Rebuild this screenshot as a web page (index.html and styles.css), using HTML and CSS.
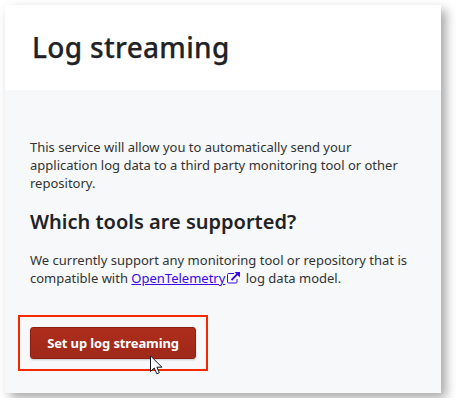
FILE: index.html
```html
<!DOCTYPE html>
<html lang="en">
<head>
<meta charset="utf-8">
<title>Log streaming</title>
<link rel="stylesheet" href="styles.css">
</head>
<body>
<main class="card">
  <header class="card-header">
    <h1 class="title">Log streaming</h1>
  </header>
  <section class="card-body">
    <p class="text">This service will allow you to automatically send your<br>application log data to a third party monitoring tool or other<br>repository.</p>
    <h2 class="subtitle">Which tools are supported?</h2>
    <p class="text">We currently support any monitoring tool or repository that is<br>compatible with <a class="link" href="#">OpenTelemetry</a><svg class="external" viewBox="0 0 14 12" aria-hidden="true"><path d="M8 1.500H2.500a1 1 0 0 0-1 1v7.500a1 1 0 0 0 1 1h7.500a1 1 0 0 0 1-1V7" fill="none" stroke="#3a0ae6" stroke-width="1"/><path d="M5.500 8L12 1.500" stroke="#3a0ae6" stroke-width="1.800"/><path d="M8.500 0H14V5.500z" fill="#3a0ae6"/></svg> log data model.</p>
    <div class="highlight">
      <button class="button" type="button">Set up log streaming</button>
      <svg class="cursor" viewBox="0 0 13 20" aria-hidden="true"><path d="M.5.8V16.500L4.200 13L6.800 18.800L9.300 17.700L6.900 12.200H11.900z" fill="#fff" stroke="#15151f" stroke-width="1"/></svg>
    </div>
  </section>
</main>
</body>
</html>
```

FILE: styles.css
```css
* {
  box-sizing: border-box;
}

body {
  margin: 0;
  padding: 5px;
  background: #fff;
  color: #333;
  font-family: "Noto Sans", sans-serif;
  overflow: hidden;
}

.card {
  width: 436px;
  height: 388px;
  background: #f6f8fa;
  box-shadow: 5px 5px 10px rgba(0, 0, 0, 0.35);
}

.card-header {
  height: 85px;
  padding: 22px 27px 0;
  background: #fff;
}

.title {
  margin: 0;
  color: #212226;
  font-size: 28px;
  font-weight: 500;
  letter-spacing: 0.33px;
  line-height: 40px;
  -webkit-text-stroke: 0.25px #212226;
}

.card-body {
  padding: 48px 25px 0;
}

.text {
  margin: 0;
  font-size: 13px;
  line-height: 18px;
  white-space: nowrap;
}

.subtitle {
  margin: 15px 0 14px;
  color: #212226;
  font-size: 20px;
  font-weight: 600;
  line-height: 30px;
}

.link {
  color: #3a0ae6;
}

.external {
  width: 14px;
  height: 12px;
  margin: 0 2px 0 1px;
  vertical-align: -1px;
}

.highlight {
  position: relative;
  width: 190px;
  height: 56px;
  margin: 28px 0 0 -12px;
  padding: 10px;
  border: 2px solid #f52800;
}

.button {
  display: block;
  width: 166px;
  height: 32px;
  padding: 0;
  border: 1px solid #8f1f14;
  border-radius: 3px;
  background: linear-gradient(#ad2d1c, #9f291a);
  box-shadow: 0 1px 2px rgba(0, 0, 0, 0.2);
  color: #fff;
  font: 700 13px/30px "Noto Sans", sans-serif;
  letter-spacing: -0.12px;
}

.cursor {
  position: absolute;
  top: 38px;
  left: 130px;
  width: 13px;
  height: 20px;
}
```
